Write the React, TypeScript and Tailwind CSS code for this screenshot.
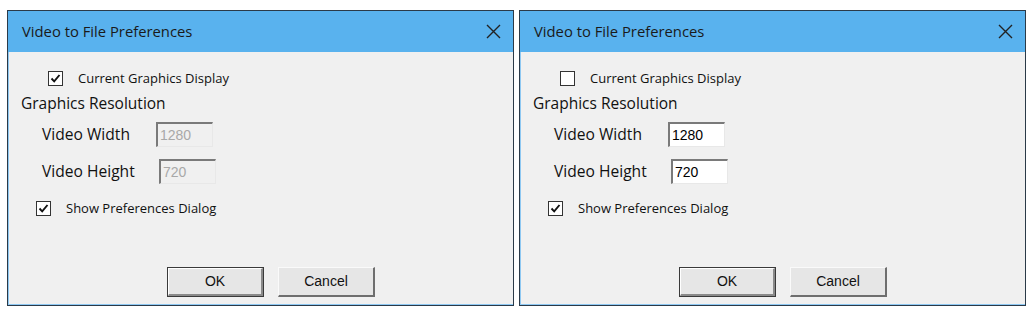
import React from "react";

const Check = ({ checked }: { checked: boolean }) => (
  <div className="w-[15px] h-[15px] border border-[#333] bg-white flex items-center justify-center shrink-0">
    {checked && (
      <svg width="11" height="11" viewBox="0 0 11 11">
        <path d="M1.5 5.5 L4.2 8.3 L9.5 2" fill="none" stroke="#111" strokeWidth="1.9" />
      </svg>
    )}
  </div>
);

const Field = ({ value, disabled, w }: { value: string; disabled: boolean; w: string }) => (
  <div
    className={`${w} h-[25px] border-t-2 border-l-2 border-r border-b border-t-[#7a7a7a] border-l-[#7a7a7a] border-r-[#e8e8e8] border-b-[#e8e8e8] flex items-center pl-[2px] text-[14px] ${
      disabled ? "bg-[#f0f0f0] text-[#a8a8a8]" : "bg-white text-black"
    }`}
    style={{ fontFamily: "'Liberation Sans', Arial, sans-serif" }}
  >
    {value}
  </div>
);

const Dialog = ({ disabled }: { disabled: boolean }) => (
  <div className="w-[507px] h-[296px] border border-[#2b3a48] flex flex-col bg-[#f0f0f0]" style={{ fontFamily: "'Open Sans', 'Noto Sans', sans-serif" }}>
    <div className="h-[41px] bg-[#59b2ee] flex items-center justify-between pl-[14px] pr-[12px] text-[14.8px] text-[#1a1a1a]">
      <span>Video to File Preferences</span>
      <svg width="15" height="15" viewBox="0 0 15 15">
        <path d="M1 1 L14 14 M14 1 L1 14" stroke="#222" strokeWidth="1.4" />
      </svg>
    </div>
    <div className="flex-1 border-l border-b border-[#8ec8f2] flex flex-col relative">
      <div className="flex items-center mt-[19px] ml-[39px] h-[15px]">
        <Check checked={disabled} />
        <span className="ml-[15px] text-[13px] text-[#111]">Current Graphics Display</span>
      </div>
      <div className="mt-[7px] ml-[12px] text-[15.5px] leading-[20px] text-[#111]">Graphics Resolution</div>
      <div className="flex items-center mt-[9px] ml-[33px] h-[25px]">
        <span className="w-[114px] text-[15.6px] text-[#111]">Video Width</span>
        <Field value="1280" disabled={disabled} w="w-[57px]" />
      </div>
      <div className="flex items-center mt-[12px] ml-[33px] h-[25px]">
        <span className="w-[117px] text-[15.6px] text-[#111]">Video Height</span>
        <Field value="720" disabled={disabled} w="w-[57px]" />
      </div>
      <div className="flex items-center mt-[17px] ml-[27px] h-[15px]">
        <Check checked={true} />
        <span className="ml-[15px] text-[13px] text-[#111]">Show Preferences Dialog</span>
      </div>
      <div className="flex mt-[51px] ml-[158px] gap-[14px]" style={{ fontFamily: "'Liberation Sans', Arial, sans-serif" }}>
        <div className="w-[97px] h-[30px] border border-[#3a3a3a] bg-[#e6e6e6] flex">
          <div className="flex-1 border-t border-l border-t-white border-l-white border-r-2 border-b-2 border-r-[#8a8a8a] border-b-[#8a8a8a] flex items-center justify-center text-[14px] text-[#111]">
            OK
          </div>
        </div>
        <div className="w-[97px] h-[30px] border-t border-l border-t-[#fafafa] border-l-[#fafafa] border-r-2 border-b-2 border-r-[#6e6e6e] border-b-[#6e6e6e] bg-[#e6e6e6] flex items-center justify-center text-[14px] text-[#111]">
          Cancel
        </div>
      </div>
    </div>
  </div>
);

export default function App() {
  return (
    <div className="w-[1035px] h-[317px] bg-white flex gap-[5px] pl-[7px] pt-[10px]">
      <Dialog disabled={true} />
      <Dialog disabled={false} />
    </div>
  );
}
